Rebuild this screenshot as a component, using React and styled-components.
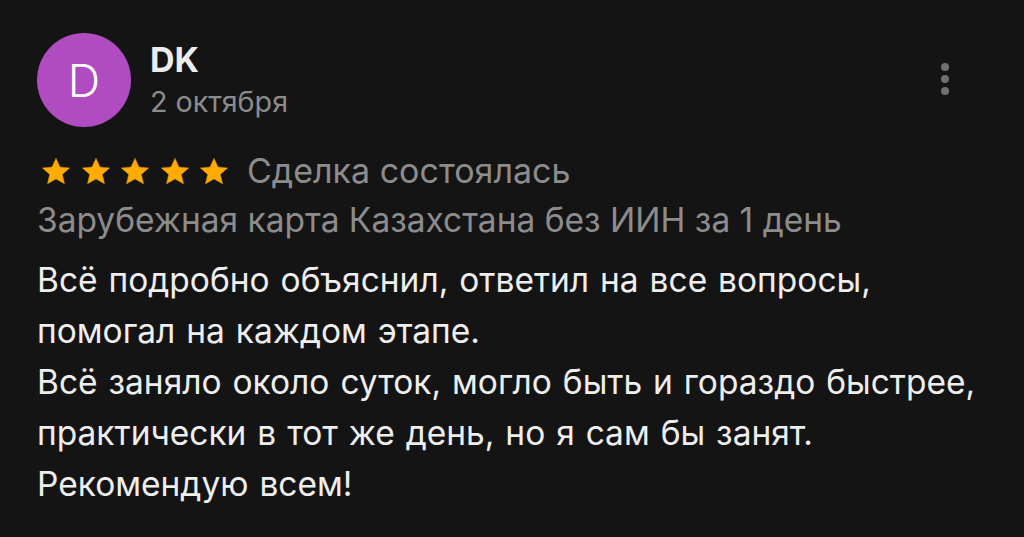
import React from "react";
import styled, { createGlobalStyle } from "styled-components";

const Global = createGlobalStyle`
  html, body { margin: 0; padding: 0; background: #141414; }
  body { font-family: Inter, "Noto Sans", sans-serif; }
`;

const Card = styled.div`
  width: 1024px;
  height: 537px;
  box-sizing: border-box;
  background: #141414;
  padding: 33px 0 0 37px;
  display: flex;
  flex-direction: column;
`;

const Header = styled.div`
  display: flex;
  align-items: center;
  gap: 19px;
`;

const Avatar = styled.div`
  width: 94px;
  height: 94px;
  border-radius: 50%;
  background: #b14bc2;
  color: #fff;
  display: flex;
  align-items: center;
  justify-content: center;
  font-size: 45px;
  font-weight: 300;
`;

const Meta = styled.div`
  display: flex;
  flex-direction: column;
  flex: 1;
`;

const Name = styled.div`
  color: #ececec;
  font-size: 34px;
  font-weight: 700;
  line-height: 44px;
`;

const DateText = styled.div`
  color: #8c8c8c;
  font-size: 28.7px;
  line-height: 40px;
`;

const Menu = styled.div`
  display: flex;
  flex-direction: column;
  gap: 4px;
  margin-right: 75px;
  margin-top: -2px;
`;

const Dot = styled.span`
  width: 8px;
  height: 8px;
  border-radius: 50%;
  background: #707070;
`;

const RatingRow = styled.div`
  display: flex;
  align-items: center;
  margin-top: 22px;
  gap: 18px;
`;

const Stars = styled.div`
  display: flex;
  gap: 9.5px;
  padding-left: 4px;
`;

const Status = styled.div`
  color: #8c8c8c;
  font-size: 34px;
  line-height: 44px;
`;

const Product = styled.div`
  color: #8c8c8c;
  font-size: 33.5px;
  line-height: 50px;
  margin-top: 2px;
`;

const Body = styled.div`
  color: #eeeeee;
  font-size: 33.5px;
  line-height: 51px;
  word-spacing: 1.5px;
  margin-top: 10px;
`;

const Star = () => (
  <svg width="30" height="29" viewBox="0 0 24 23">
    <path
      fill="#ffab00"
      stroke="#c78400"
      strokeWidth="0.4"
      strokeLinejoin="round"
      d="M12 .8l3.2 7.1 7.8.7-5.9 5.2 1.8 7.6L12 17.4 5.1 21.4l1.8-7.6L1 8.6l7.8-.7z"
    />
  </svg>
);

export default function App() {
  return (
    <>
      <Global />
      <Card>
        <Header>
          <Avatar>D</Avatar>
          <Meta>
            <Name>DK</Name>
            <DateText>2 октября</DateText>
          </Meta>
          <Menu>
            <Dot />
            <Dot />
            <Dot />
          </Menu>
        </Header>
        <RatingRow>
          <Stars>
            {[0, 1, 2, 3, 4].map((i) => (
              <Star key={i} />
            ))}
          </Stars>
          <Status>Сделка состоялась</Status>
        </RatingRow>
        <Product>Зарубежная карта Казахстана без ИИН за 1 день</Product>
        <Body>
          Всё подробно объяснил, ответил на все вопросы,
          <br />
          помогал на каждом этапе.
          <br />
          Всё заняло около суток, могло быть и гораздо быстрее,
          <br />
          практически в тот же день, но я сам бы занят.
          <br />
          Рекомендую всем!
        </Body>
      </Card>
    </>
  );
}
